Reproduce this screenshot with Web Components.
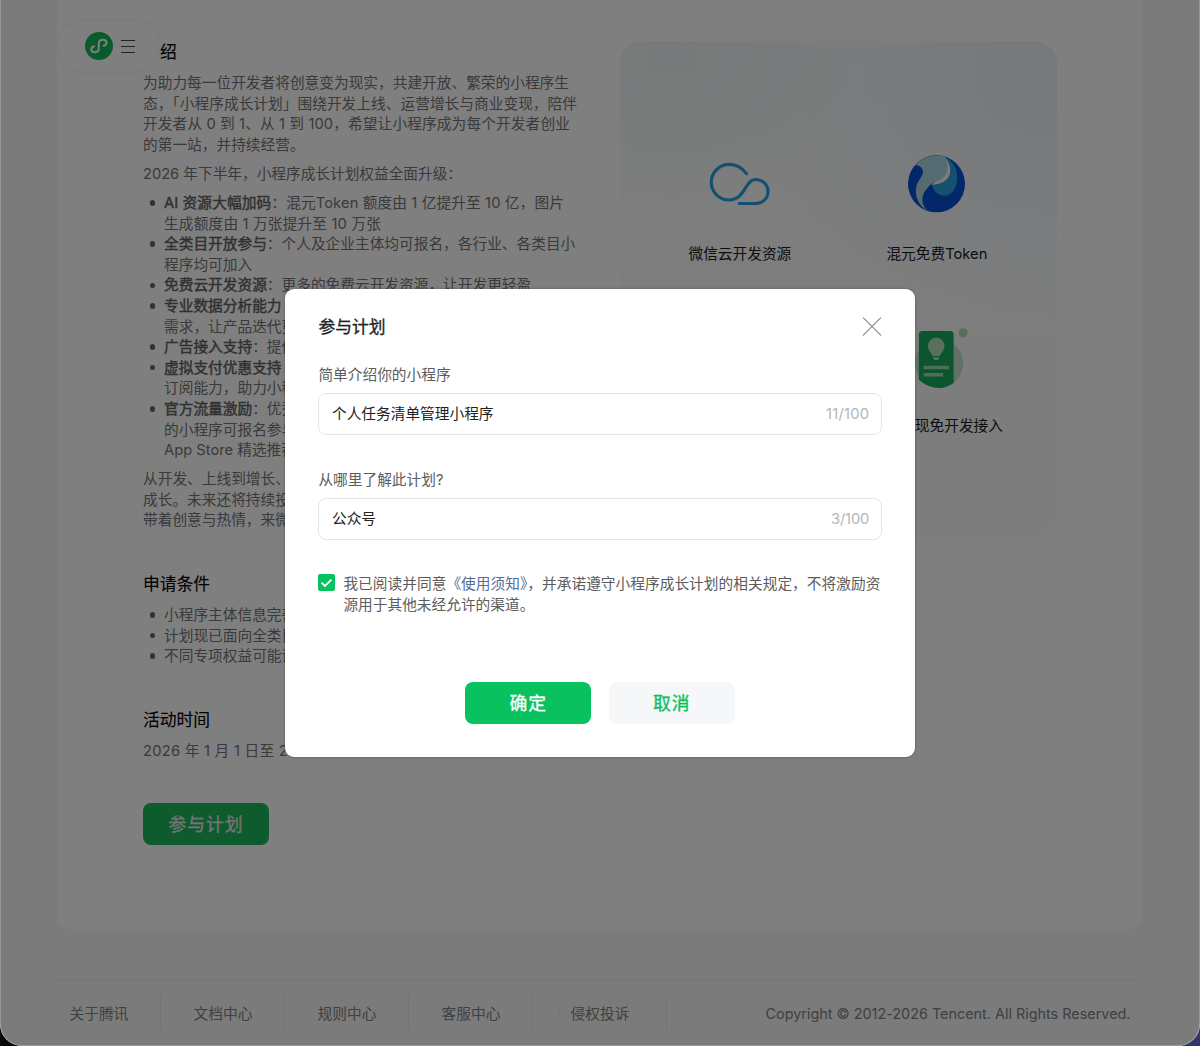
<!DOCTYPE html>
<html lang="zh-CN">
<head>
<meta charset="utf-8">
<title>小程序成长计划</title>
<style>
html,body{margin:0;height:100%;overflow:hidden;background:linear-gradient(90deg,#08080c 50%,#34356a 50%)}
body{font-family:Inter,"Noto Sans CJK SC",sans-serif;font-size:14.7px;line-height:20.6px}
</style>
</head>
<body>
<growth-app></growth-app>

<template id="t-app">
<style>
:host{display:block;position:relative;box-sizing:border-box;width:1200px;height:1046px;overflow:hidden;border-radius:0 0 22px 22px;background:#f7f7f7}
main{box-sizing:border-box;height:929px;margin:0 59px 0 57px;padding:41px 84px 0 86px;background:#fff;border-radius:0 0 10px 10px;display:flex;justify-content:space-between;align-items:flex-start}
.mask{position:absolute;inset:0;background:rgba(0,0,0,.5);box-sizing:border-box;border:1px solid rgba(190,190,190,.42);border-top:0;border-radius:0 0 22px 22px;display:flex}
nav-pill{position:absolute;left:59px;top:21px}
join-dialog{position:absolute;left:285px;top:289px}
</style>
<main><plan-article></plan-article><benefit-panel></benefit-panel></main>
<site-footer></site-footer>
<nav-pill></nav-pill>
<div class="mask"></div>
<join-dialog></join-dialog>
</template>

<template id="t-pill">
<style>
:host{display:flex;box-sizing:border-box;width:100px;height:50px;border-radius:25px;background:#fff;box-shadow:0 0 8px rgba(60,80,130,.09);padding:11px 23px 0 26px;justify-content:space-between}
svg{display:block}
.m{margin:8px 1px 0 0}
</style>
<svg width="28" height="28" viewBox="0 0 28 28"><circle cx="14" cy="14" r="14" fill="#10b755"/><path d="M9.1 14.2C7.3 14.9 6.3 15.9 6.3 17.3C6.3 19.1 7.7 20.2 9.5 20.2C11.9 20.2 13.8 18.8 13.8 16.5V11.5C13.8 9.2 15.6 7.8 18 7.8C19.9 7.8 21.5 8.9 21.5 10.7C21.5 12.2 20.4 13.3 18.6 13.8" fill="none" stroke="#fff" stroke-width="2" stroke-linecap="round"/></svg>
<svg class="m" width="14" height="13" viewBox="0 0 14 13"><path d="M0 .5H14M0 6.5H14M0 12.5H14" stroke="#444" stroke-width="1"/></svg>
</template>

<template id="t-article">
<style>
:host{display:block;width:440px;color:#747474}
h2{margin:0;font-size:16.8px;line-height:24px;font-weight:400;color:#000;-webkit-text-stroke:.1px}
.first{padding-left:17px;margin-top:-.6px}
p{margin:0 0 8.2px}
ul{list-style:none;margin:0 0 8.4px;padding:0 0 0 21px}
li{position:relative}
li::before{content:"";position:absolute;left:-14.5px;top:7.2px;width:5.4px;height:5.4px;border-radius:50%;background:#666}
b{font-weight:400;color:#606060;-webkit-text-stroke:.4px}
fit-line{display:block}
plan-button{margin-top:42px}
</style>
<h2 class="first">绍</h2>
<p style="padding-top:8.7px">
<fit-line>为助力每一位开发者将创意变为现实，共建开放、繁荣的小程序生</fit-line>
<fit-line w="434">态，「小程序成长计划」围绕开发上线、运营增长与商业变现，陪伴</fit-line>
<fit-line w="427">开发者从 0 到 1、从 1 到 100，希望让小程序成为每个开发者创业</fit-line>
<fit-line>的第一站，并持续经营。</fit-line></p>
<p style="margin-bottom:8.8px"><fit-line w="319">2026 年下半年，小程序成长计划权益全面升级：</fit-line></p>
<ul>
<li><fit-line w="400"><b>AI 资源大幅加码</b>：混元Token 额度由 1 亿提升至 10 亿，图片</fit-line><fit-line w="217">生成额度由 1 万张提升至 10 万张</fit-line></li>
<li><fit-line><b>全类目开放参与</b>：个人及企业主体均可报名，各行业、各类目小</fit-line><fit-line>程序均可加入</fit-line></li>
<li><fit-line><b>免费云开发资源</b>：更多的免费云开发资源，让开发更轻盈</fit-line></li>
<li><fit-line><b>专业数据分析能力</b></fit-line><fit-line>需求，让产品迭代更</fit-line></li>
<li><fit-line><b>广告接入支持</b>：提供</fit-line></li>
<li><fit-line><b>虚拟支付优惠支持</b></fit-line><fit-line>订阅能力，助力小程</fit-line></li>
<li><fit-line><b>官方流量激励</b>：优秀</fit-line><fit-line>的小程序可报名参与</fit-line><fit-line w="132">App Store 精选推荐</fit-line></li>
</ul>
<p style="margin-bottom:41.4px"><fit-line>从开发、上线到增长、</fit-line><fit-line>成长。未来还将持续投</fit-line><fit-line>带着创意与热情，来微</fit-line></p>
<h2>申请条件</h2>
<ul style="padding-top:8.6px;margin-bottom:41.4px">
<li>小程序主体信息完善</li><li>计划现已面向全类目</li><li>不同专项权益可能设</li></ul>
<h2>活动时间</h2>
<p style="margin:8.6px 0 0"><fit-line w="145">2026 年 1 月 1 日至 2</fit-line></p>
<plan-button style="--bg:#1cb65b;--fg:#e8e8e8">参与计划</plan-button>
</template>

<template id="t-button">
<style>
:host{display:flex;width:126px;height:42px;border-radius:8px;align-items:center;justify-content:center;background:var(--bg,#0ac160);color:var(--fg,#fff);font-size:17.8px;line-height:24px;letter-spacing:1px;font-weight:400;-webkit-text-stroke:.3px;box-sizing:border-box;padding:2px 0 0 0}
</style><slot></slot>
</template>

<template id="t-panel">
<style>
:host{display:grid;grid-template-columns:197px 197px;grid-template-rows:172px 172px;box-sizing:border-box;width:437px;height:496px;padding:113px 0 0 21.4px;border-radius:22px;color:#1a1a1a;
background:radial-gradient(ellipse 50% 32% at 12% 3%,rgba(235,244,243,.9),rgba(243,248,247,0)),radial-gradient(ellipse 75% 50% at 100% 8%,#ecf2f9,rgba(247,249,252,0)),linear-gradient(180deg,#f9fbfc 0,#fcfcfc 35%,#f9fbf9 65%,#f9fbfa 100%)}
svg{display:block;overflow:visible;height:60px}
div{display:flex;flex-direction:column;align-items:center}
span{margin-top:30px;white-space:nowrap}
</style>
<div><svg width="60" height="60" viewBox="0 0 60 60"><path transform="translate(-.4 8)" d="M37 11.8C32.6 5.8 26.6 2.4 19.5 2.4A17.8 17.8 0 0 0 19.5 38C27 38 30 34.5 34 29C38 22.5 40.5 17.5 46.5 17.5A12 12 0 0 1 46.5 41.5H29.5" fill="none" stroke="#2b9ede" stroke-width="3.1" stroke-linecap="round" stroke-linejoin="round"/></svg><span>微信云开发资源</span></div>
<div><svg width="57" height="60" viewBox="0 -1.3 57 60"><circle cx="28.5" cy="28.5" r="28.5" fill="#0750d4"/><path d="M36 1C45 5 50 14 49.2 24C48.6 34 43 40.5 37 40.5C29.5 40.5 25 35.5 24 29L39 21Z" fill="#27a3dc"/><path d="M35.5 .8C41 6 43 12 42 18C40.5 25 34 29 23.5 29.5L35 20Z" fill="#f6f6f6"/><path d="M7.3 10A28.5 28.5 0 0 1 36 1C40.5 7 40.7 15.5 37 20.3C32.5 26.5 25 26 20.5 31.5C13 39 12 48 19.5 55.6C10 50 6.3 40 8.4 31C9.7 25 15.3 21 15 16.5C14.8 12 11 9.5 7.3 10Z" fill="#acd7e3"/></svg><span><fit-line w="101">混元免费Token</fit-line></span></div>
<div></div>
<div><svg width="56" height="60" viewBox="0 -5 56 60"><g transform="translate(-.4 0)"><circle cx="30.5" cy="32.5" r="24.2" fill="#c2e5c9"/><circle cx="54.5" cy="1.8" r="4.5" fill="#b2dcba"/><path d="M14 0H41.3Q45 0 45 3.7V52Q38 57 30.5 57Q20 57 10.3 49V3.7Q10.3 0 14 0Z" fill="#16ad5c"/><path d="M23.9 25C23.6 22 19.4 20.3 19.4 14.9A8.2 8.2 0 0 1 35.8 14.9C35.8 20.3 31.6 22 31.3 25ZM24.5 26.3H30.7L29.8 29H25.4Z" fill="#b4e0bc"/><path d="M15 36.5H40.3M15 43.7H34.5" stroke="#a0dcae" stroke-width="3.4"/></g></svg><span>广告变现免开发接入</span></div>
</template>

<template id="t-footer">
<style>
:host{display:flex;box-sizing:border-box;height:66px;margin:51px 59px 0 57px;border-top:1px solid #e9e9e9;padding:15px 10.5px 0 0;justify-content:space-between;color:#808080}
nav{display:flex;height:34px}
a{box-sizing:border-box;display:flex;align-items:center;width:124px;border-right:1px solid #e6e6e6;padding-top:1.6px}
a:first-child{width:104px;padding-left:12.5px}
i{width:1px;height:16px;background:#eee;margin:0 10.6px 0 21px}
a:last-child{width:134px}
a:last-child i{margin-left:26px}
</style>
<nav><a>关于腾讯</a><a><i></i>文档中心</a><a><i></i>规则中心</a><a><i></i>客服中心</a><a><i></i>侵权投诉</a></nav>
<fit-line w="365" style="line-height:35px;font-size:14.4px">Copyright © 2012-2026 Tencent. All Rights Reserved.</fit-line>
</template>

<template id="t-dialog">
<style>
:host{display:flex;flex-direction:column;box-sizing:border-box;width:630px;height:468px;border-radius:9px;background:#fff;padding:26px 33.4px 0;color:#5c5c5c;box-shadow:0 0 3px rgba(0,0,0,.3)}
header{display:flex;justify-content:space-between;align-items:center;height:24px;font-size:16.8px;color:#222;font-weight:400;-webkit-text-stroke:.3px}
.agree{display:flex;gap:8px;margin-top:34px}
.agree svg{flex:none}
.agree div{padding-top:.7px}
fit-line{display:block}
a{color:#576b95}
footer{display:flex;gap:17.5px;justify-content:center;margin-top:67px}
</style>
<header><span>参与计划</span><svg width="20" height="20" viewBox="0 0 20 20"><path d="M1 .5L19 18.5M19 .5L1 18.5" stroke="#999" stroke-width="1.15"/></svg></header>
<text-field label="简单介绍你的小程序" count="11/100" cw="43" style="margin-top:26px">个人任务清单管理小程序</text-field>
<text-field label="从哪里了解此计划?" count="3/100" cw="38" style="margin-top:35px">公众号</text-field>
<div class="agree"><svg width="17" height="17" viewBox="0 0 17 17"><rect width="17" height="17" rx="2" fill="#0ac160"/><path d="M3.5 8.7L7 12L13.4 5.6" fill="none" stroke="#fff" stroke-width="1.8"/></svg>
<div><fit-line w="537">我已阅读并同意<a>《使用须知》</a>，并承诺遵守小程序成长计划的相关规定，不将激励资</fit-line><fit-line>源用于其他未经允许的渠道。</fit-line></div></div>
<footer><plan-button>确定</plan-button><plan-button style="--bg:#f6f7f9;--fg:#0ac160">取消</plan-button></footer>
</template>

<template id="t-field">
<style>
:host{display:block}
.box{display:flex;align-items:center;justify-content:space-between;box-sizing:border-box;height:42px;border:1px solid #e5e5e5;border-radius:8px;padding:2px 11.5px 0 12.6px;margin-top:7.2px;color:#222}
:host+text-field .label{margin-top:-.4px}
.n{color:#b5b5b5}
</style>
<div class="label"></div><div class="box"><slot></slot><fit-line class="n"></fit-line></div>
</template>

<script>
const stamp = (host, id) => {
  const root = host.attachShadow({ mode: 'open' });
  root.append(document.getElementById(id).content.cloneNode(true));
  return root;
};

/* One line of text; "w" sets its advance width through letter-spacing. */
class FitLine extends HTMLElement {
  constructor() {
    super();
    this.attachShadow({ mode: 'open' }).innerHTML =
      '<style>:host{display:block;white-space:nowrap}span{display:inline-block}</style><span><slot></slot></span>';
  }
  connectedCallback() { this.fit(); }
  fit() {
    const w = parseFloat(this.getAttribute('w'));
    const span = this.shadowRoot.querySelector('span');
    const now = span.getBoundingClientRect().width;
    if (w && now) span.style.letterSpacing = (w - now) / [...this.textContent].length + 'px';
  }
}
customElements.define('fit-line', FitLine);

customElements.define('text-field', class extends HTMLElement {
  constructor() { super(); stamp(this, 't-field'); }
  connectedCallback() {
    const r = this.shadowRoot, n = r.querySelector('.n');
    r.querySelector('.label').textContent = this.getAttribute('label');
    n.textContent = this.getAttribute('count');
    n.setAttribute('w', this.getAttribute('cw'));
    n.fit();
  }
});

for (const [tag, id] of [
  ['plan-button', 't-button'], ['nav-pill', 't-pill'], ['plan-article', 't-article'],
  ['benefit-panel', 't-panel'], ['site-footer', 't-footer'], ['join-dialog', 't-dialog'],
  ['growth-app', 't-app']
]) customElements.define(tag, class extends HTMLElement {
  constructor() { super(); stamp(this, id); }
});
</script>
</body>
</html>
